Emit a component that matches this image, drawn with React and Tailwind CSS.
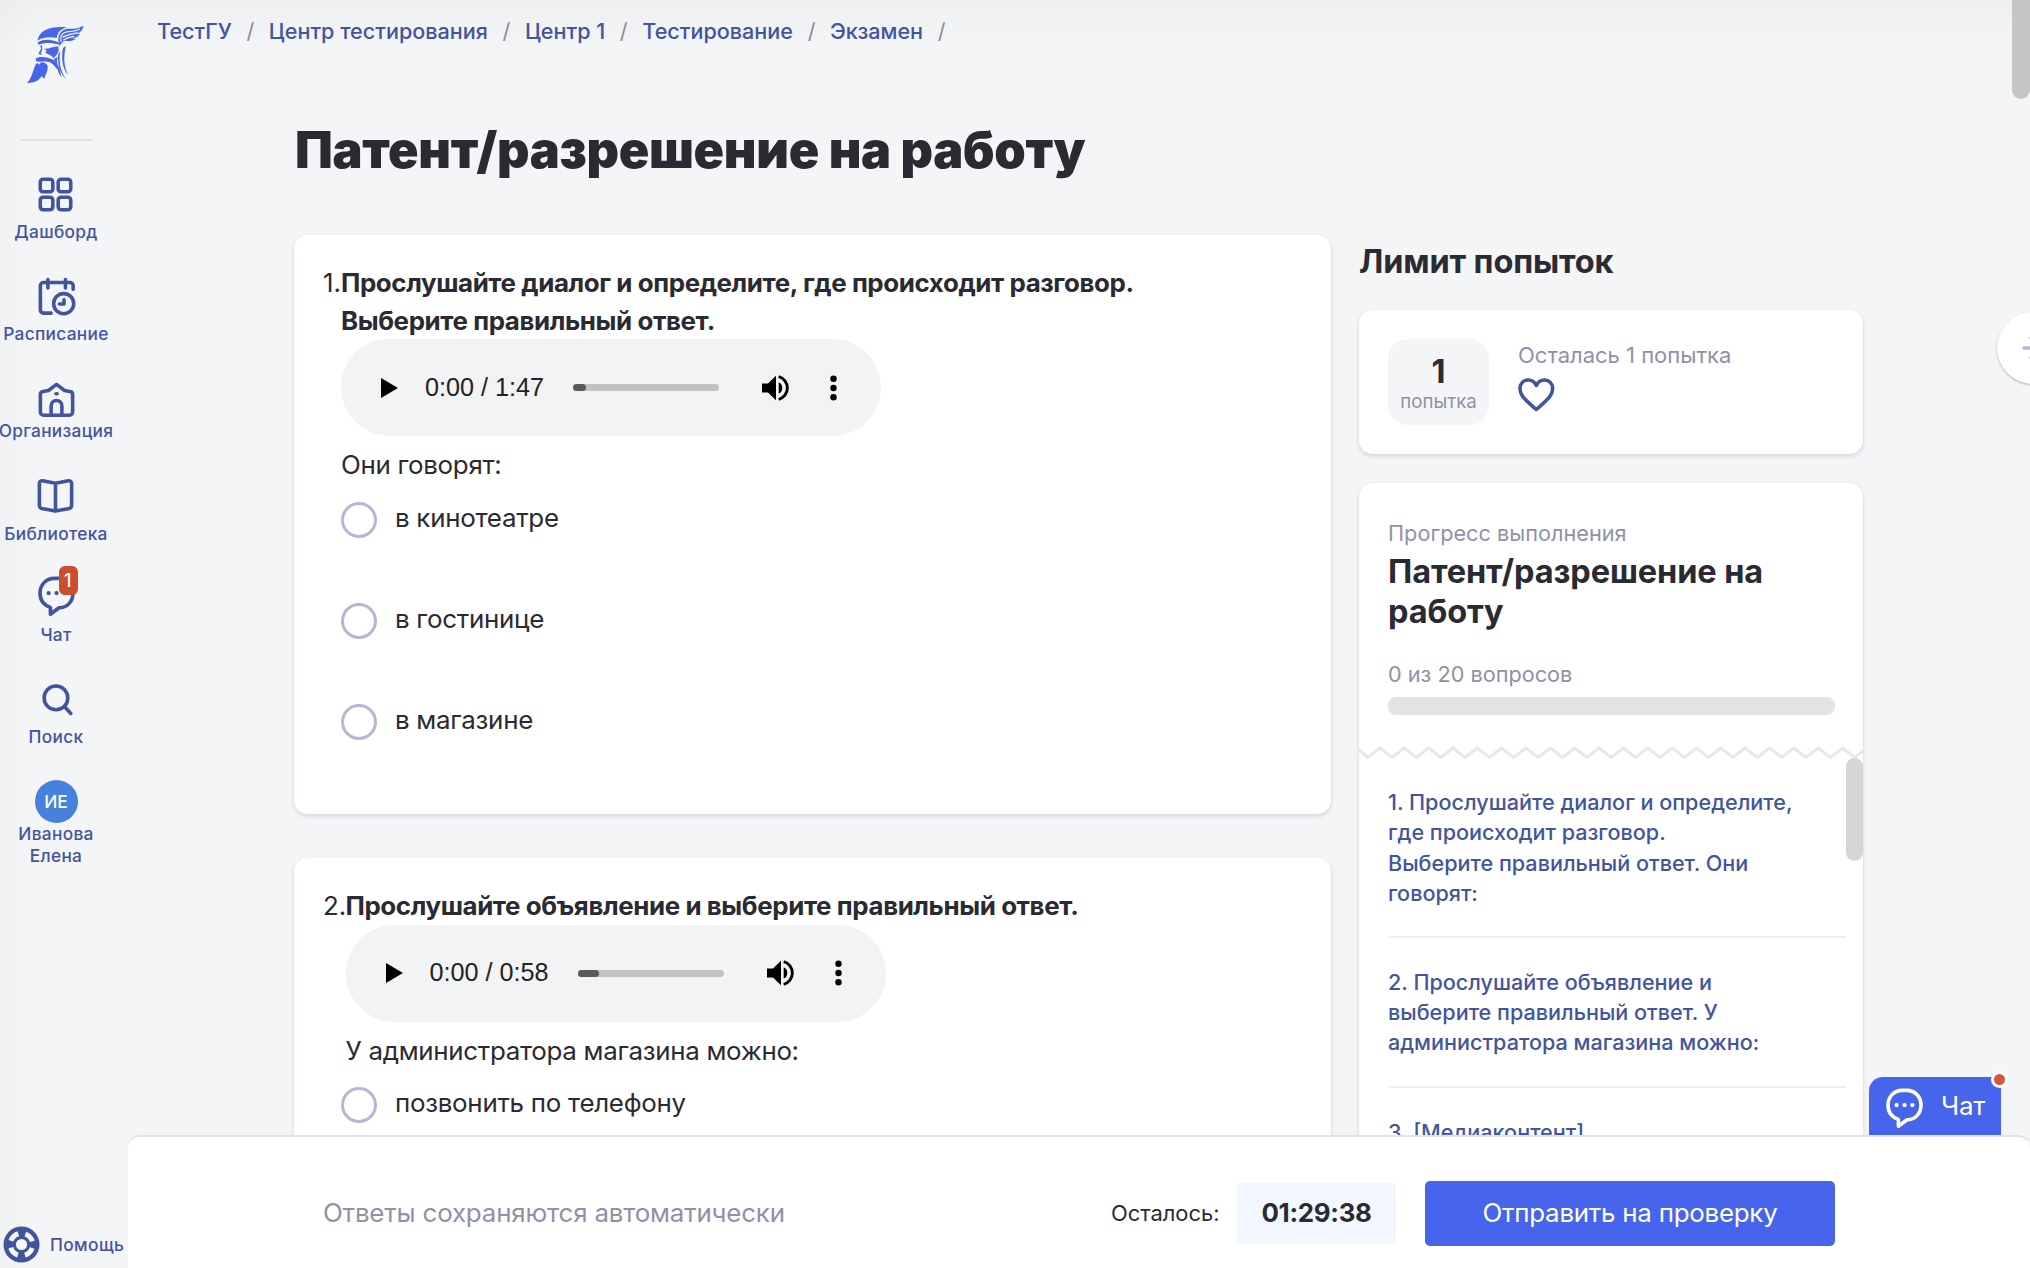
const ink = "#43549f";

function Svg({ children, size = 43, vb = 24, sw = 2, className = "" }) {
  return (
    <svg width={size} height={size} viewBox={`0 0 ${vb} ${vb}`} fill="none" stroke="currentColor" strokeWidth={sw} strokeLinecap="round" strokeLinejoin="round" className={className}>
      {children}
    </svg>
  );
}

function Logo() {
  return (
    <svg width="60" height="60" viewBox="24 30 180 180" fill="#4665ec" className="ml-[2px] shrink-0">
      <path d="M55 74C62 44 88 30 145 34 126 38 116 48 113 66 92 62 72 64 55 74Z" />
      <path d="M56 79C76 68 98 70 118 79L120 86C100 80 80 78 58 86Z" />
      <path d="M122 90C112 66 120 42 146 38 164 39 180 38 193 29 191 44 182 51 168 55L183 53C178 62 170 66 158 67L171 68C162 76 146 76 138 74 130 76 128 82 122 90Z" />
      <path d="M127 78C121 60 130 48 150 47 164 46 174 44 183 39" fill="none" stroke="#f3f5f7" strokeWidth="3.5" />
      <path d="M131 64C144 55 160 54 176 50M133 73C142 64 154 63 166 61" fill="none" stroke="#f3f5f7" strokeWidth="4" />
      <path d="M75 98C88 101 100 92 118 91L119 104C116 116 108 120 104 127 96 114 86 118 78 108L84 105Z" />
      <path d="M64 88 66 98 58 114 70 117 66 112 70 98 69 88Z" />
      <path d="M50 127C66 120 84 124 97 129 110 134 116 144 115 160 106 150 100 138 84 137 72 136 60 138 51 136Z" />
      <path d="M50 145 56 140 60 146 66 139C82 140 88 147 86 158 84 170 78 178 76 188L68 181C58 196 42 202 24 201 38 188 42 164 50 145Z" />
      <path d="M118 114 124 106C119 132 122 160 140 189 122 170 114 142 118 114Z" />
      <path d="M132 96 141 90C133 120 134 150 147 176 130 158 126 126 132 96Z" />
      <path d="M104 130 116 122C112 134 114 144 120 154 125 166 124 174 128 184 112 166 116 146 104 130Z" />
    </svg>
  );
}

const DashIcon = (
  <Svg>
    <rect x="3.5" y="3.5" width="7" height="7" rx="1.6" />
    <rect x="13.5" y="3.5" width="7" height="7" rx="1.6" />
    <rect x="3.5" y="13.5" width="7" height="7" rx="1.6" />
    <rect x="13.5" y="13.5" width="7" height="7" rx="1.6" />
  </Svg>
);
const CalIcon = (
  <Svg>
    <path d="M9 21.3H4.8a1.8 1.8 0 0 1-1.8-1.8V6a1.8 1.8 0 0 1 1.8-1.8H19.5A1.8 1.8 0 0 1 21.3 6V8M7.2 2.5v4.8M17 2.5v4.8" />
    <circle cx="16" cy="16" r="5.6" />
    <path d="M16.2 13.8v2.4h-2.6" />
  </Svg>
);
const OrgIcon = (
  <Svg>
    <path d="M12 3 7.5 6.4 4.5 7A1.8 1.8 0 0 0 3 8.8V18.4a1.8 1.8 0 0 0 1.8 1.8H19.2a1.8 1.8 0 0 0 1.8-1.8V8.8A1.8 1.8 0 0 0 19.5 7L16.5 6.4Z" />
    <path d="M9 20V15a3 3 0 0 1 6 0V20M11.7 8.2h.6" />
  </Svg>
);
const BookIcon = (
  <Svg>
    <path d="M12 5.2 4.8 3.8A1.5 1.5 0 0 0 3 5.3V17.6a1.7 1.7 0 0 0 1.3 1.6L12 20.7l7.7-1.5A1.7 1.7 0 0 0 21 17.6V5.3a1.5 1.5 0 0 0-1.8-1.5ZM12 5.2V20.5" />
  </Svg>
);
function ChatIcon({ size, sw }) {
  return (
    <Svg size={size} sw={sw}>
      <path d="M8.6 19.2V23L13.4 19.4C18 19.4 21.2 16 21.2 11.2 21.2 6.4 17.6 3 13.4 3H10.6C6.2 3 2.8 6.6 2.8 11.2 2.8 15 5 18 8.6 19.2Z" />
      <path d="M7.6 11.2h.02M12 11.2h.02M16.4 11.2h.02" strokeWidth="2.4" />
    </Svg>
  );
}
const SearchIcon = (
  <Svg>
    <circle cx="11.7" cy="11.1" r="6.6" />
    <path d="m16.4 15.9 3.6 3.9" />
  </Svg>
);

function NavItem({ icon, label, className, badge }) {
  return (
    <a className={`flex flex-col items-center text-[17.3px] leading-[22px] font-medium tracking-[0.3px] whitespace-nowrap ${className}`}>
      <span className="relative block h-[43px] w-[43px]">
        {icon}
        {badge && (
          <span className="absolute top-[-7px] left-[24px] flex h-[29px] w-[19px] items-center justify-center rounded-[6px] bg-[#cb4e2d] text-[18px] text-white">{badge}</span>
        )}
      </span>
      <span>{label}</span>
    </a>
  );
}

function Sidebar() {
  return (
    <aside className="flex w-32 shrink-0 flex-col" style={{ color: ink }}>
      <div className="flex w-28 flex-col items-center pt-[26px]">
        <Logo />
        <div className="mt-[53px] h-[2px] w-[72px] bg-[#dfe1e4]" />
        <NavItem icon={DashIcon} label="Дашборд" className="mt-[32px] [&>span:last-child]:mt-[5px]" />
        <NavItem icon={CalIcon} label="Расписание" className="mt-[32px] [&>span:last-child]:mt-[5px]" />
        <NavItem icon={OrgIcon} label="Организация" className="mt-[34px] [&>span:last-child]:mt-[-2px]" />
        <NavItem icon={BookIcon} label="Библиотека" className="mt-[32px] [&>span:last-child]:mt-[6px]" />
        <NavItem icon={<ChatIcon size={43} sw={2} />} label="Чат" badge="1" className="mt-[28px] [&>span:last-child]:mt-[8px]" />
        <NavItem icon={SearchIcon} label="Поиск" className="mt-[32px] [&>span:last-child]:mt-[5px]" />
        <div className="mt-[32px] flex h-[43px] w-[43px] items-center justify-center rounded-full bg-[#4682dc] text-[17.3px] font-medium text-white">ИЕ</div>
        <div className="text-center text-[17.3px] leading-[21.5px] font-medium tracking-[0.3px]">Иванова<br />Елена</div>
      </div>
      <div className="mt-auto flex items-center gap-[10px] pb-[5px] pl-[3px] text-[17.3px] font-medium tracking-[0.4px]">
        <svg width="37" height="37" viewBox="0 0 37 37" className="shrink-0">
          <circle cx="18.5" cy="18.5" r="18" fill={ink} />
          <circle cx="18.5" cy="18.5" r="11.2" fill="none" stroke="#f6f7f9" strokeWidth="5" strokeDasharray="10.4 7.19" strokeDashoffset="-3.6" />
          <circle cx="18.5" cy="18.5" r="5.6" fill="#f6f7f9" />
        </svg>
        <span>Помощь</span>
      </div>
    </aside>
  );
}

function Player({ time, filled }) {
  return (
    <div className="flex h-[97px] w-[540px] items-center rounded-full bg-[#f1f3f4]">
      <svg width="17" height="20" viewBox="0 0 17 20" className="ml-[40px]"><path d="M0 0 17 10 0 20Z" /></svg>
      <span className="ml-[27px] w-[122px] font-['Liberation_Sans',sans-serif] text-[25.2px] font-normal whitespace-nowrap text-[#222]">{time}</span>
      <div className="ml-[26px] h-[7px] w-[146px] rounded-full bg-[#c2c2c2]">
        <div className="h-full rounded-full bg-[#5a5a5a]" style={{ width: filled }} />
      </div>
      <svg width="28" height="26" viewBox="0 0 28 26" className="ml-[43px]">
        <path d="M0 8.5H6L14 .8V25.2L6 17.5H0Z" />
        <path d="M16.7 7.3a6.3 6.3 0 0 1 0 11.4Z" />
        <path d="M16.7 1.7a11.7 11.7 0 0 1 0 22.6" fill="none" stroke="#000" strokeWidth="2.9" />
      </svg>
      <svg width="7" height="26" viewBox="0 0 7 26" className="ml-[40px]">
        <circle cx="3.5" cy="3.8" r="3.2" /><circle cx="3.5" cy="13" r="3.2" /><circle cx="3.5" cy="22.2" r="3.2" />
      </svg>
    </div>
  );
}

function Option({ label }) {
  return (
    <div className="flex h-[101px] gap-[18px]">
      <span className="mt-[1px] h-9 w-9 rounded-full border-[3px] border-[#b4b9d3]" />
      <span className="text-[25.9px] leading-[34px] tracking-[-0.27px]">{label}</span>
    </div>
  );
}

function Question({ n, title, time, filled, prompt, options, indent, className = "" }) {
  return (
    <section className={`rounded-[14px] bg-white px-[29px] pt-[29px] shadow-[0_2px_4px_rgba(60,70,90,0.18)] ${className}`}>
      <div className="flex text-[25.9px] leading-[37.5px]">
        <span className={`shrink-0 ${indent}`}>{n}.</span>
        <div>
          <div className="font-bold tracking-[-0.4px] whitespace-nowrap">{title}</div>
          <Player time={time} filled={filled} />
          <div className="mt-[10px] tracking-[-0.3px]">{prompt}</div>
        </div>
      </div>
      <div className="mt-[17px] pl-[18px]">
        {options.map((o) => <Option key={o} label={o} />)}
      </div>
    </section>
  );
}

const crumbs = ["ТестГУ", "Центр тестирования", "Центр 1", "Тестирование", "Экзамен"];

function Aside() {
  return (
    <div className="flex w-[504px] shrink-0 flex-col">
      <h2 className="mt-[7px] h-[68px] text-[32.5px] leading-[40px] font-bold tracking-[-0.15px]">Лимит попыток</h2>
      <div className="flex h-[144px] rounded-[14px] bg-white pt-[29px] pl-[29px] shadow-[0_2px_4px_rgba(60,70,90,0.18)]">
        <div className="flex h-[86px] w-[101px] flex-col items-center rounded-[20px] bg-[#f3f5f7]">
          <span className="mt-[15px] text-[32.5px] leading-[36px] font-bold">1</span>
          <span className="text-[18.7px] leading-[24px] text-[#9091a6]">попытка</span>
        </div>
        <div className="ml-[29px] text-[22px] text-[#9091a6]">
          <div className="mt-[2px] leading-[28px]">Осталась 1 попытка</div>
          <svg width="37" height="34" viewBox="0 0 37 34" fill="none" stroke={ink} strokeWidth="3.6" strokeLinejoin="round" className="mt-[9px]">
            <path d="M18.3 31.5 C9 23.5 2 18 2 10.5 C2 5.5 5.5 2 10 2 C14 2 17 4.5 18.3 7.5 C19.6 4.5 22.6 2 26.6 2 C31.1 2 34.6 5.5 34.6 10.5 C34.6 18 27.6 23.5 18.3 31.5Z" />
          </svg>
        </div>
      </div>
      <div className="mt-[29px] flex h-[760px] flex-col rounded-t-[14px] bg-white pt-[35px] shadow-[0_2px_4px_rgba(60,70,90,0.18)]">
        <div className="pr-[28px] pl-[29px]">
          <div className="text-[21.7px] leading-[30px] text-[#9091a6]">Прогресс выполнения</div>
          <div className="mt-[4px] text-[32.5px] leading-[39.5px] font-bold tracking-[-0.1px]">Патент/разрешение на<br />работу</div>
          <div className="mt-[28px] text-[21.7px] leading-[30px] text-[#9091a6]">0 из 20 вопросов</div>
          <div className="mt-[8px] h-[18px] rounded-[8px] bg-[#e3e3e3]" />
        </div>
        <svg width="504" height="13" viewBox="0 0 504 13" className="mt-[31px] shrink-0">
          <path d={"M-3.5 1" + Array.from({ length: 21 }, (_, i) => ` L${8.7 + i * 24.35} 11.5 L${20.9 + i * 24.35} 2`).join("")} fill="none" stroke="#e6e8ec" strokeWidth="3" />
        </svg>
        <div className="flex pl-[29px] text-[21.6px] leading-[30.4px]" style={{ color: ink }}>
          <div className="w-[458px] font-medium">
            <p className="border-b-2 border-[#eff0f1] pt-[28px] pb-[27px]">1. Прослушайте диалог и определите,<br />где происходит разговор.<br />Выберите правильный ответ. Они<br />говорят:</p>
            <p className="border-b-2 border-[#eff0f1] pt-[29px] pb-[28px]">2. Прослушайте объявление и<br />выберите правильный ответ. У<br />администратора магазина можно:</p>
            <p className="pt-[29px]">3. [Медиаконтент]</p>
          </div>
          <div className="mt-[-1px] h-[103px] w-[17px] rounded-full bg-[#d6d6d6]" />
        </div>
      </div>
    </div>
  );
}

export default function App() {
  return (
    <div className="relative flex h-[1268px] w-[2030px] overflow-hidden bg-[#f3f5f7] bg-[linear-gradient(to_bottom,rgba(0,0,0,0.025),transparent_50px),linear-gradient(to_right,rgba(0,0,0,0.015),transparent_32px)] font-[Inter,sans-serif] text-[#2a2a33]">
      <Sidebar />
      <div className="flex min-w-0 flex-1 flex-col">
        <div className="flex h-[1135px] flex-col overflow-hidden">
          <nav className="flex h-[62px] shrink-0 items-center pl-[29px] text-[21.6px] font-medium" style={{ color: ink }}>
            {crumbs.map((c) => (
              <span key={c} className="flex whitespace-nowrap"><span>{c}</span><span className="px-[14.6px] font-normal text-[#8a8b99]">/</span></span>
            ))}
          </nav>
          <h1 className="mt-[54px] ml-[167px] h-[119px] shrink-0 text-[50.4px] leading-[68px] font-black tracking-[-0.3px] whitespace-nowrap">Патент/разрешение на работу</h1>
          <div className="ml-[166px] flex gap-[28px]">
            <main className="w-[1037px] shrink-0">
              <Question n={1} indent="w-[18px]" className="h-[579px]" title={<>Прослушайте диалог и определите, где происходит разговор.<br />Выберите правильный ответ.</>} time="0:00 / 1:47" filled={13} prompt="Они говорят:" options={["в кинотеатре", "в гостинице", "в магазине"]} />
              <Question n={2} indent="w-[22.5px]" className="mt-[44px]" title="Прослушайте объявление и выберите правильный ответ." time="0:00 / 0:58" filled={21} prompt="У администратора магазина можно:" options={["позвонить по телефону"]} />
            </main>
            <Aside />
          </div>
        </div>
        <footer className="flex h-[133px] items-center rounded-t-[12px] border-t-2 border-[#dfe3e8] bg-white pt-[21px] pl-[195px] text-[25.9px]">
          <span className="w-[788px] tracking-[-0.18px] text-[#9091a6]">Ответы сохраняются автоматически</span>
          <span className="w-[126px] text-[21.9px]">Осталось:</span>
          <span className="flex h-[61px] w-[159px] items-center justify-center bg-[#f2f7fe] font-bold tracking-[-0.3px]">01:29:38</span>
          <button className="ml-[29px] h-[65px] w-[410px] rounded-[5px] bg-[#4665ec] tracking-[-0.25px] text-white">Отправить на проверку</button>
        </footer>
      </div>
      <div className="absolute top-0 right-0 h-[99px] w-[18px] rounded-b-full bg-[#c5c5c5]" />
      <div className="absolute top-[312px] left-[1997px] flex h-[72px] w-[72px] items-center rounded-full bg-white pl-[25px] text-[#b4b9d3] shadow-[0_1px_2px_rgba(0,0,0,0.3)]">
        <svg width="28" height="28" viewBox="0 0 28 28" fill="none" stroke="currentColor" strokeWidth="3.4" strokeLinecap="round"><path d="M2 14H26M9 4 18 14 9 24" /></svg>
      </div>
      <div className="absolute top-[1077px] left-[1869px] flex h-[58px] w-[132px] items-center gap-[15px] rounded-tl-[14px] bg-[#4665ec] pl-[14px] text-[25.9px] tracking-[-0.2px] text-white">
        <ChatIcon size={43} sw={2} />
        <span>Чат</span>
        <span className="absolute top-[-6px] right-[-7px] h-[17px] w-[17px] rounded-full border-[3px] border-white bg-[#dc533c]" />
      </div>
    </div>
  );
}
